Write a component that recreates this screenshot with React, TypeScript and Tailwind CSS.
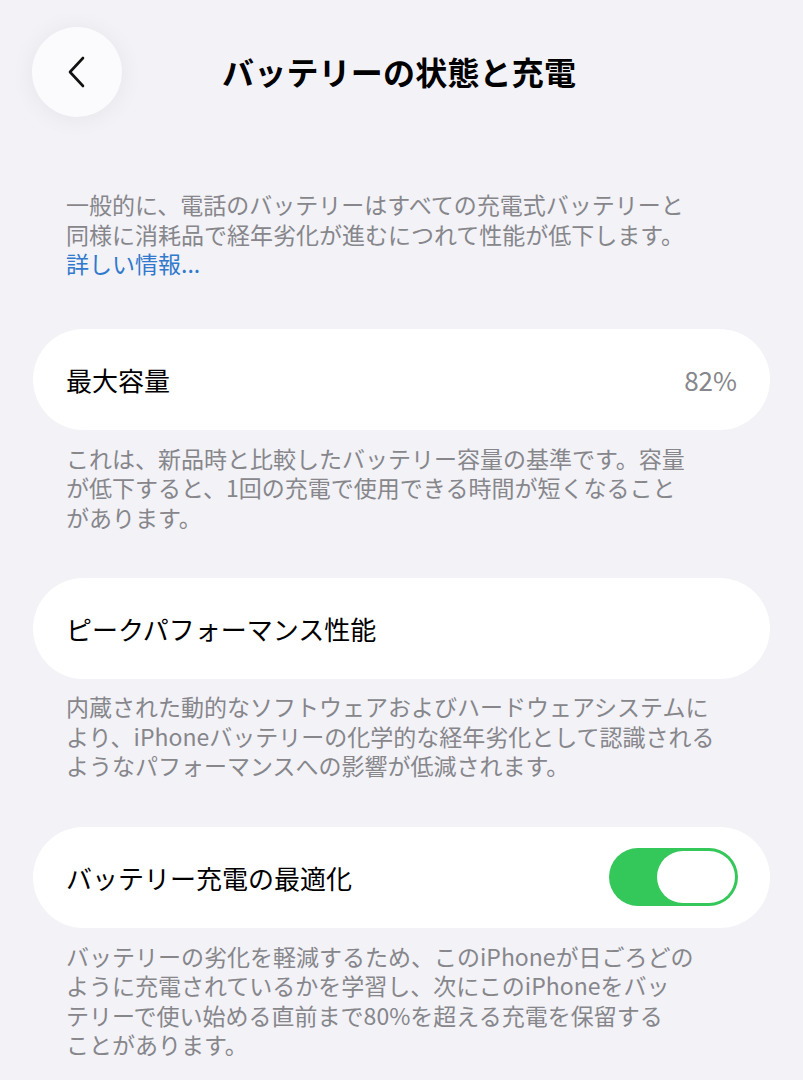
import React from "react";

const font = { fontFamily: '"Noto Sans CJK JP", "Noto Sans", sans-serif' };

function Toggle() {
  return (
    <div className="w-[129px] h-[58px] rounded-full bg-[#34c759] p-[3px] flex justify-end">
      <div className="w-[78px] h-[52px] rounded-full bg-white" />
    </div>
  );
}

function Card({ label, right }: { label: string; right?: React.ReactNode }) {
  return (
    <div className="mx-[33px] h-[101px] rounded-full bg-white flex items-center justify-between pl-[33px] pr-[33px]">
      <span className="text-[26px] text-black">{label}</span>
      {right}
    </div>
  );
}

function Note({ lines, className = "" }: { lines: string[]; className?: string }) {
  return (
    <p className={"px-[66px] text-[23px] leading-[29.5px] text-[#86868b] " + className}>
      {lines.map((l, i) => (
        <span key={i} className="block whitespace-nowrap">
          {l}
        </span>
      ))}
    </p>
  );
}

export default function App() {
  return (
    <div className="min-h-[1080px] w-[803px] bg-[#f2f2f7] overflow-hidden" style={font}>
      <header className="h-[140px] flex items-start pt-[27px] pl-[32px]">
        <button className="w-[90px] h-[90px] rounded-full bg-[#fbfbfd] shadow-[0_2px_24px_rgba(0,0,0,0.06)] flex items-center justify-center">
          <svg width="22" height="32" viewBox="0 0 22 32" fill="none">
            <path d="M17 2 L4 16 L17 30" stroke="#111" strokeWidth="2.6" strokeLinecap="round" strokeLinejoin="round" />
          </svg>
        </button>
        <h1 className="ml-[100px] mt-[24px] text-[32px] leading-[40px] font-bold text-black tracking-[0.2px]">
          バッテリーの状態と充電
        </h1>
      </header>

      <Note
        className="mt-[50px]"
        lines={[
          "一般的に、電話のバッテリーはすべての充電式バッテリーと",
          "同様に消耗品で経年劣化が進むにつれて性能が低下します。",
        ]}
      />
      <p className="px-[66px] text-[23px] leading-[29.5px] text-[#3079cc]">詳しい情報...</p>

      <div className="mt-[50px]">
        <Card label="最大容量" right={<span className="text-[26px] text-[#86868b]">82%</span>} />
      </div>
      <Note
        className="mt-[14px]"
        lines={[
          "これは、新品時と比較したバッテリー容量の基準です。容量",
          "が低下すると、1回の充電で使用できる時間が短くなること",
          "があります。",
        ]}
      />

      <div className="mt-[46px]">
        <Card label="ピークパフォーマンス性能" />
      </div>
      <Note
        className="mt-[13px]"
        lines={[
          "内蔵された動的なソフトウェアおよびハードウェアシステムに",
          "より、iPhoneバッテリーの化学的な経年劣化として認識される",
          "ようなパフォーマンスへの影響が低減されます。",
        ]}
      />

      <div className="mt-[46px]">
        <Card label="バッテリー充電の最適化" right={<div className="-mr-[1px]"><Toggle /></div>} />
      </div>
      <Note
        className="mt-[14px]"
        lines={[
          "バッテリーの劣化を軽減するため、このiPhoneが日ごろどの",
          "ように充電されているかを学習し、次にこのiPhoneをバッ",
          "テリーで使い始める直前まで80%を超える充電を保留する",
          "ことがあります。",
        ]}
      />
    </div>
  );
}
